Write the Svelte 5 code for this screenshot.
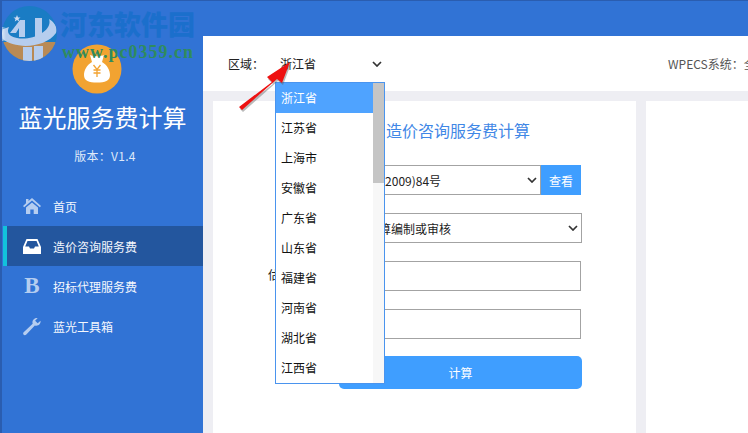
<script>
  const provinces = ['浙江省','江苏省','上海市','安徽省','广东省','山东省','福建省','河南省','湖北省','江西省'];
  const nav = [
    { label: '首页', icon: 'home' },
    { label: '造价咨询服务费', icon: 'inbox', active: true },
    { label: '招标代理服务费', icon: 'b' },
    { label: '蓝光工具箱', icon: 'wrench' }
  ];
</script>

<div class="window">
  <aside class="sidebar">
    <div class="coin">
      <svg viewBox="0 0 50 50" width="50" height="50">
        <circle cx="25" cy="25" r="24.500" fill="#f2a331"/>
        <path d="M18 11 C21 12.500 29 12.500 32 11 L30 18 C35 21 38 26 38 31 C38 37 33 38.500 25 38.500 C17 38.500 12 37 12 31 C12 26 15 21 20 18 Z" fill="#fff"/>
        <path d="M21.500 21 L25 25.500 L28.500 21 M25 25.500 V33 M21.500 26 H28.500 M21.500 29 H28.500" fill="none" stroke="#f2a331" stroke-width="1.300"/>
      </svg>
    </div>
    <h1>蓝光服务费计算</h1>
    <p class="version">版本：V1.4</p>
    <nav>
      {#each nav as item}
        <div class="nav-item" class:active={item.active}>
          <span class="nav-icon">
            {#if item.icon === 'home'}
              <svg viewBox="0 0 18 16" width="18" height="16"><path d="M9 0 L18 8 L16.800 9.200 L9 2.600 L1.200 9.200 L0 8 L3 5.300 V1 H5.500 V3.100 Z M3 9.600 L9 4.400 L15 9.600 V16 H10.700 V11.500 H7.300 V16 H3 Z" fill="#b5cdf0"/></svg>
            {:else if item.icon === 'inbox'}
              <svg viewBox="0 0 18 15" width="18" height="15"><path fill-rule="evenodd" d="M3.500 0 H14.500 L18 8 V15 H0 V8 Z M4.500 2 L2.200 7.500 H6 L7 9.500 H11 L12 7.500 H15.800 L13.500 2 Z" fill="#fff"/></svg>
            {:else if item.icon === 'b'}
              <span class="b-glyph">B</span>
            {:else}
              <svg viewBox="0 0 19 19" width="19" height="19"><path d="M18.500 3.500 C19 7 16 9.500 12.500 8.500 L3.500 18 C2.500 19 1 18.800 0.500 18 C0 17 0 16 1 15.200 L10.200 6.500 C9.200 3 12 0 15.500 0.500 L12.800 3.500 L15.500 6 Z" fill="#b5cdf0"/></svg>
            {/if}
          </span>
          <span>{item.label}</span>
        </div>
      {/each}
    </nav>
  </aside>

  <div class="main">
    <div class="topbar"></div>
    <header class="header">
      <span class="region-label">区域：</span>
      <span class="region-select">
        <span>浙江省</span>
        <svg class="chev" viewBox="0 0 10 6" width="10" height="6"><path d="M1 1 L5 5 L9 1" fill="none" stroke="#333" stroke-width="1.700"/></svg>
      </span>
      <span class="system">WPECS系统：全国</span>
    </header>
    <div class="content">
      <section class="card form-card">
        <h2>造价咨询服务费计算</h2>
        <div class="row row-first">
          <div class="control field-a"><span class="value">(2009)84号</span><svg class="chev" viewBox="0 0 10 6" width="10" height="6"><path d="M1 1 L5 5 L9 1" fill="none" stroke="#333" stroke-width="1.700"/></svg></div>
          <button class="view">查看</button>
        </div>
        <div class="row row-second">
          <div class="control field-b"><span class="value">算编制或审核</span><svg class="chev" viewBox="0 0 10 6" width="10" height="6"><path d="M1 1 L5 5 L9 1" fill="none" stroke="#333" stroke-width="1.700"/></svg></div>
        </div>
        <div class="row row-input">
          <span class="row-label">估</span>
          <div class="control input"></div>
        </div>
        <div class="row row-input2">
          <div class="control input"></div>
        </div>
        <button class="calc">计算</button>
      </section>
      <section class="card side-card"></section>
    </div>
  </div>

  <div class="dropdown">
    <ul>
      {#each provinces as p, i}
        <li class:selected={i === 0}>{p}</li>
      {/each}
    </ul>
    <div class="track"><div class="thumb"></div></div>
  </div>

  <svg class="arrow" viewBox="0 0 60 56" width="60" height="56">
    <path d="M3 49 L36 24 L31 19 L54 4 L46 25 L41 21 L6 52 Z" fill="#555" opacity=".4" transform="translate(1 2)"/>
    <path d="M3 49 L36 24 L31 19 L54 4 L46 25 L41 21 L6 52 Z" fill="#ee1111"/>
  </svg>

  <div class="watermark">
    <svg class="wm-logo" viewBox="0 0 70 70" width="70" height="70">
      <defs>
        <clipPath id="c"><circle cx="29.500" cy="33.500" r="27.500"/></clipPath>
        <linearGradient id="glare" x1="0" x2="1" y1="0" y2="0"><stop offset="0" stop-color="#fff"/><stop offset="1" stop-color="#fff" stop-opacity="0"/></linearGradient>
      </defs>
      <g clip-path="url(#c)">
        <rect width="70" height="70" fill="#1a7cc4"/>
        <rect y="42" width="70" height="28" fill="#b98a55"/>
        <path d="M23 47 H32 V62 H23 Z M34 46 H43 V62 H34 Z" fill="#b6cdee"/>
        <path d="M-2 34 C8 50 44 50 56 33 C58 27 54 22 49 19 C53 30 34 41 17 38 C10 37 6 33 9 27 C4 29 -2 30 -2 34 Z" fill="#b6cdee"/>
        <path d="M10 33 L20 20 H25 V37 H19 V28 L16 33 Z M35 18 H42 V37 H35 Z" fill="#b6cdee"/>
        <path d="M17 15 L18 17.500 L20.500 17.500 L18.500 19 L19.200 21.500 L17 20 L14.800 21.500 L15.500 19 L13.500 17.500 L16 17.500 Z" fill="#cfdcf2"/>
      </g>
      <rect x="0" y="27" width="6" height="14" fill="url(#glare)" opacity=".8"/>
    </svg>
    <span class="wm-cn">河东软件园</span>
    <span class="wm-url">www.pc0359.cn</span>
  </div>
</div>

<style>
  :global(body) { margin: 0; }
  .window {
    position: relative;
    width: 748px;
    height: 433px;
    display: flex;
    overflow: hidden;
    box-sizing: border-box;
    border-left: 2px solid #2a5db0;
    border-top: 1px solid #2a5db0;
    background: #eeeef3;
    font-family: "Noto Sans CJK SC", "Liberation Sans", sans-serif;
    font-size: 12px;
    color: #222;
  }
  .sidebar {
    width: 201px;
    flex: none;
    background: #3173d5;
    color: #fff;
    display: flex;
    flex-direction: column;
    align-items: center;
    padding-top: 43px;
    box-sizing: border-box;
  }
  .coin { height: 50px; width: 50px; margin-right: 11px; }
  .coin svg { display: block; }
  h1 {
    margin: 6px 0 0;
    font-size: 24px;
    line-height: 34px;
    font-weight: 400;
    white-space: nowrap;
  }
  .version { margin: 13px 0 0 5px; font-size: 12px; line-height: 18px; color: #dfe9f9; letter-spacing: .3px; }
  nav { width: 100%; margin-top: 21px; }
  .nav-item {
    height: 40px;
    display: flex;
    align-items: center;
    color: #f4f7fd;
    font-size: 12px;
    padding-left: 21px;
    box-sizing: border-box;
  }
  .nav-item.active {
    background: #23569e;
    border-left: 4px solid #12c2dc;
    margin-left: 1px;
    padding-left: 16px;
  }
  .nav-icon {
    width: 18px;
    height: 20px;
    margin-right: 12px;
    display: flex;
    align-items: center;
    justify-content: center;
  }
  .b-glyph { font: 700 23px "Liberation Serif", serif; line-height: 20px; color: #b5cdf0; }
  .main { flex: 1; min-width: 0; display: flex; flex-direction: column; }
  .topbar { height: 35px; background: #3173d5; flex: none; }
  .header {
    height: 55px;
    flex: none;
    background: #fff;
    display: flex;
    align-items: center;
    padding-left: 25px;
    white-space: nowrap;
    overflow: hidden;
    font-size: 12px;
  }
  .region-label { width: 52px; flex: none; }
  .region-select { width: 102px; flex: none; display: flex; justify-content: space-between; align-items: center; }
  .system { margin-left: 286px; color: #555; flex: none; }
  .chev { display: block; flex: none; }
  .content { flex: 1; display: flex; gap: 10px; padding: 10px 0 0 10px; min-height: 0; }
  .card { background: #fff; }
  .form-card { width: 423px; flex: none; position: relative; display: flex; flex-direction: column; }
  .side-card { flex: 1; }
  h2 {
    margin: 18px 0 0 173px;
    font-size: 16px;
    line-height: 22px;
    font-weight: 400;
    color: #3f87e6;
    white-space: nowrap;
  }
  .row { display: flex; align-items: stretch; position: relative; margin-left: 126px; }
  .row-first { margin-top: 24px; height: 30px; }
  .row-second { margin-top: 18px; height: 30px; }
  .row-input { margin-top: 18px; height: 30px; }
  .row-input2 { margin-top: 18px; height: 30px; }
  .control {
    border: 1px solid #a3a3a3;
    box-sizing: border-box;
    display: flex;
    align-items: center;
    justify-content: space-between;
    background: #fff;
    padding-right: 3px;
    white-space: nowrap;
    font-size: 12px;
  }
  .field-a { width: 202px; }
  .field-b { width: 243px; }
  .input { width: 242px; }
  .value { margin-left: 39px; }
  .field-a .value { margin-left: 41px; }
  .view {
    width: 40px;
    border: 0;
    padding: 0;
    background: #3f9eff;
    color: #fff;
    font: inherit;
    font-size: 12px;
  }
  .row-label { position: absolute; left: -71px; top: 5px; }
  .calc {
    margin: 17px 0 0 126px;
    width: 243px;
    height: 33px;
    border: 0;
    border-radius: 5px;
    background: #3f9eff;
    color: #fff;
    font: inherit;
    font-size: 12px;
    padding: 0;
    flex: none;
  }
  .dropdown {
    position: absolute;
    left: 273px;
    top: 81px;
    width: 110px;
    height: 302px;
    box-sizing: border-box;
    border: 1px solid #4a94ee;
    background: #fff;
    display: flex;
    overflow: hidden;
  }
  ul { list-style: none; margin: 0; padding: 0; flex: 1; }
  li {
    height: 30px;
    line-height: 30px;
    padding-left: 5px;
    font-size: 12px;
    color: #111;
  }
  li.selected { background: #4fa3ff; color: #fff; }
  .track { width: 11px; background: #f7f7f7; flex: none; }
  .thumb { height: 100px; background: #c5c5c5; }
  .arrow { position: absolute; left: 234px; top: 57px; }
  .watermark { position: absolute; left: -2px; top: -1px; width: 210px; height: 70px; }
  .wm-logo { position: absolute; left: 0; top: 0; }
  .wm-cn {
    position: absolute;
    left: 60px;
    top: 7px;
    font: 900 27px "Noto Sans CJK SC", sans-serif;
    line-height: 34px;
    color: #1b6fcc;
    white-space: nowrap;
  }
  .wm-url {
    position: absolute;
    left: 62px;
    top: 42px;
    font: 700 18px "Liberation Serif", serif;
    line-height: 20px;
    letter-spacing: 1px;
    color: #2f8b5e;
    white-space: nowrap;
  }
</style>
